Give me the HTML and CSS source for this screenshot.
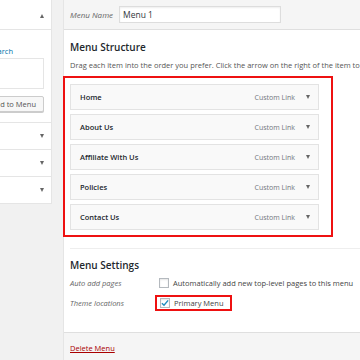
FILE: index.html
```html
<!DOCTYPE html>
<html lang="en">
  <head>
    <meta charset="UTF-8" />
    <meta name="viewport" content="width=device-width, initial-scale=1.0" />
    <title>Menus</title>
    <link rel="stylesheet" href="styles.css">
  </head>

  <body>
    <div class="page">
      <div class="side">
        <div class="side-inner">
          <div class="acc-head">
            <span class="arrow up"></span>
          </div>
          <div class="acc-body">
            <div class="tabs">
              <a href="#" class="tab-link">Search</a>
            </div>
            <div class="results"></div>
            <div class="add-row">
              <button class="add-btn">Add to Menu</button>
            </div>
          </div>
          <div class="acc-row">
            <span class="arrow down"></span>
          </div>
          <div class="acc-row">
            <span class="arrow down"></span>
          </div>
          <div class="acc-row">
            <span class="arrow down"></span>
          </div>
        </div>
      </div>

      <div class="main">
        <div class="name-bar">
          <label class="name-label">Menu Name</label>
          <input class="name-input" type="text" value="Menu 1">
        </div>

        <div class="main-body">
          <h3 class="title">Menu Structure</h3>
          <p class="hint">Drag each item into the order you prefer. Click the arrow on the right of the item to reveal additional configuration options.</p>

          <ul class="menu-list">
            <li class="menu-item"><span class="item-title">Home</span><span class="item-type">Custom Link</span><span class="arrow down"></span></li>
            <li class="menu-item"><span class="item-title">About Us</span><span class="item-type">Custom Link</span><span class="arrow down"></span></li>
            <li class="menu-item"><span class="item-title">Affiliate With Us</span><span class="item-type">Custom Link</span><span class="arrow down"></span></li>
            <li class="menu-item"><span class="item-title">Policies</span><span class="item-type">Custom Link</span><span class="arrow down"></span></li>
            <li class="menu-item"><span class="item-title">Contact Us</span><span class="item-type">Custom Link</span><span class="arrow down"></span></li>
          </ul>

          <div class="settings">
            <h3 class="title flush">Menu Settings</h3>
            <div class="setting-row">
              <span class="setting-label">Auto add pages</span>
              <label class="check">
                <span class="box"></span>
                Automatically add new top-level pages to this menu
              </label>
            </div>
            <div class="setting-row">
              <span class="setting-label">Theme locations</span>
              <label class="check marked">
                <span class="box checked">
                  <svg width="9" height="8" viewBox="0 0 9 8"><path d="M1 4.2 L3.4 6.6 L8 1" fill="none" stroke="#1e8cbe" stroke-width="1.6"/></svg>
                </span>
                Primary Menu
              </label>
            </div>
          </div>
        </div>

        <div class="footer">
          <a href="#" class="delete">Delete Menu</a>
        </div>
      </div>
    </div>
  </body>
</html>
```

FILE: styles.css
```css
* {
  box-sizing: border-box;
}

html,
body {
  margin: 0;
  overflow: hidden;
}

body {
  background-color: #f1f1f1;
  font-family: "Open Sans", "Liberation Sans", sans-serif;
  color: #444;
  font-size: 7.5px;
}

.page {
  display: flex;
  align-items: flex-start;
  width: 420px;
}

/* left column, mostly cut off */
.side {
  width: 52px;
  overflow: hidden;
  flex-shrink: 0;
  background-color: #fff;
  border-right: 1px solid #e5e5e5;
}
.side-inner {
  width: 200px;
  margin-left: -148px;
}
.acc-head,
.acc-row {
  display: flex;
  align-items: center;
  justify-content: flex-end;
  padding: 0 8px 0 10px;
  border-bottom: 1px solid #e5e5e5;
}
.acc-head {
  height: 30px;
  padding-top: 2px;
}
.acc-row {
  height: 27px;
}
.acc-body {
  padding: 16px 8px 10px 10px;
  border-bottom: 1px solid #e5e5e5;
}
.tabs {
  display: flex;
  justify-content: flex-end;
  padding-right: 31px;
  line-height: 11px;
}
.tab-link {
  color: #0073aa;
  text-decoration: none;
}
.results {
  margin-top: 1px;
  height: 31px;
  border: 1px solid #e5e5e5;
}
.add-row {
  display: flex;
  justify-content: flex-end;
  margin-top: 7px;
}
.add-btn {
  height: 16px;
  padding: 0 7px;
  font-family: inherit;
  font-size: 7.5px;
  color: #555;
  background-color: #f7f7f7;
  border: 1px solid #ccc;
  border-radius: 2px;
  box-shadow: 0 1px 0 #ccc;
}

.arrow {
  width: 0;
  height: 0;
  border-left: 2.5px solid transparent;
  border-right: 2.5px solid transparent;
}
.arrow.down {
  border-top: 4px solid #666;
}
.arrow.up {
  border-bottom: 4px solid #666;
}

/* main panel */
.main {
  width: 356px;
  margin-left: 11px;
  flex-shrink: 0;
  background-color: #fff;
  border-left: 1px solid #e5e5e5;
}
.name-bar {
  display: flex;
  align-items: center;
  height: 30px;
  padding: 0 7px 0 6px;
  background-color: #f5f5f5;
  border-bottom: 1px solid #dfdfdf;
}
.name-label {
  width: 49px;
  font-size: 8px;
  font-style: italic;
  color: #666;
}
.name-input {
  width: 162px;
  height: 17px;
  padding: 0 3px;
  font-family: inherit;
  font-size: 8.5px;
  color: #32373c;
  border: 1px solid #ddd;
  box-shadow: inset 0 1px 2px rgba(0, 0, 0, 0.07);
  outline: none;
}

.main-body {
  padding: 10px 0 21px 0;
}
.title {
  margin: 0 0 0 6px;
  font-size: 10px;
  font-weight: 600;
  line-height: 14px;
  color: #23282d;
}
.title.flush {
  margin-left: 0;
}
.hint {
  margin: 6px 0 0 6px;
  line-height: 11px;
  white-space: nowrap;
  color: #555;
}

.menu-list {
  list-style: none;
  width: 270px;
  margin: 5px 0 0 -1px;
  padding: 6px 12px 5px 5px;
  border: 2px solid #ee1111;
  display: flex;
  flex-direction: column;
  gap: 4px;
}
.menu-item {
  display: flex;
  align-items: center;
  height: 26px;
  padding: 0 8px 0 9px;
  background-color: #f9f9f9;
  border: 1px solid #e3e3e3;
}
.item-title {
  flex: 1;
  font-weight: 600;
  color: #23282d;
}
.item-type {
  margin-right: 11px;
  font-size: 7px;
  color: #72777c;
}

.settings {
  margin: 11px 0 0 6px;
  padding-top: 9px;
  border-top: 1px solid #eee;
}
.setting-row {
  display: flex;
  align-items: center;
  height: 16px;
  margin-top: 3px;
}
.setting-row + .setting-row {
  margin-top: 4px;
}
.setting-label {
  width: 89px;
  font-style: italic;
  color: #666;
}
.check {
  display: flex;
  align-items: center;
  gap: 4px;
  height: 16px;
  white-space: nowrap;
  color: #444;
}
.check.marked {
  margin-left: -4px;
  padding: 0 6px 0 3px;
  border: 2px solid #ee1111;
}
.box {
  display: flex;
  align-items: center;
  justify-content: center;
  width: 10px;
  height: 10px;
  background-color: #fff;
  border: 1px solid #b4b9be;
  box-shadow: inset 0 1px 2px rgba(0, 0, 0, 0.1);
}

.footer {
  height: 40px;
  padding: 9px 0 0 6px;
  background-color: #f5f5f5;
  border-top: 1px solid #dfdfdf;
  line-height: 12px;
}
.delete {
  color: #a00;
}
```
